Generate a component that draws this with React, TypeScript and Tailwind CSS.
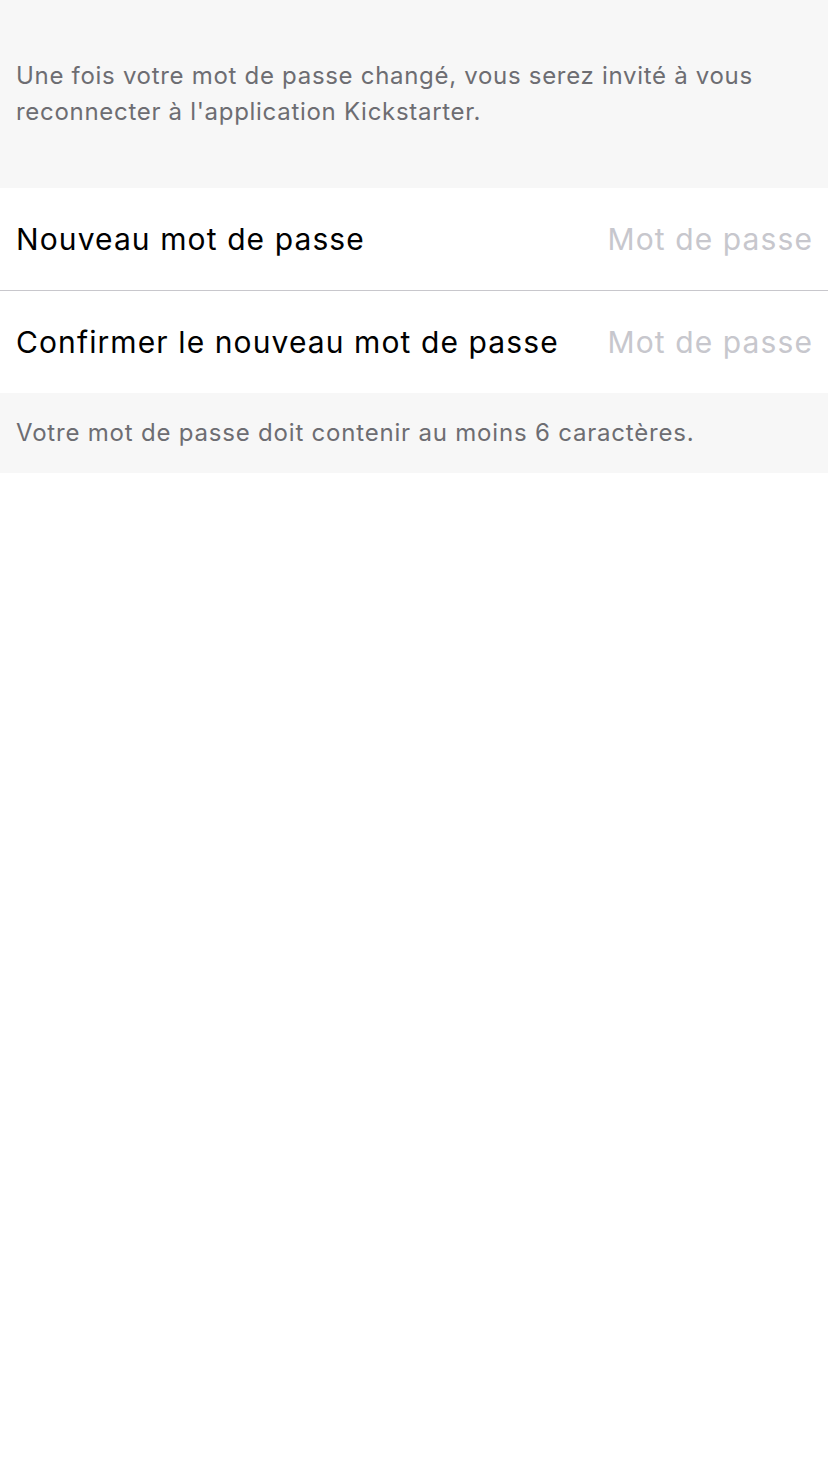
export default function App() {
  return (
    <div className="min-h-[1472px] bg-white font-['Inter','Liberation_Sans',sans-serif]">
      <div className="h-[188px] bg-[#f7f7f7] px-4 pt-[58px] text-[24px] leading-[36px] tracking-[0.7px] text-[#6d6d72]">
        Une fois votre mot de passe changé, vous serez invité à vous reconnecter à l'application Kickstarter.
      </div>
      <div className="flex h-[102px] items-center justify-between pl-4 pr-[15px] text-[30px] tracking-[1.1px]">
        <span className="text-black">Nouveau mot de passe</span>
        <span className="text-[#c7c7cd]">Mot de passe</span>
      </div>
      <div className="h-px bg-[#c8c7cc]" />
      <div className="flex h-[102px] items-center justify-between pl-4 pr-[15px] text-[30px] tracking-[1.1px]">
        <span className="text-black">Confirmer le nouveau mot de passe</span>
        <span className="text-[#c7c7cd]">Mot de passe</span>
      </div>
      <div className="flex h-[80px] items-center bg-[#f7f7f7] px-4 text-[24px] tracking-[0.8px] text-[#6d6d72]">
        Votre mot de passe doit contenir au moins 6 caractères.
      </div>
    </div>
  )
}
